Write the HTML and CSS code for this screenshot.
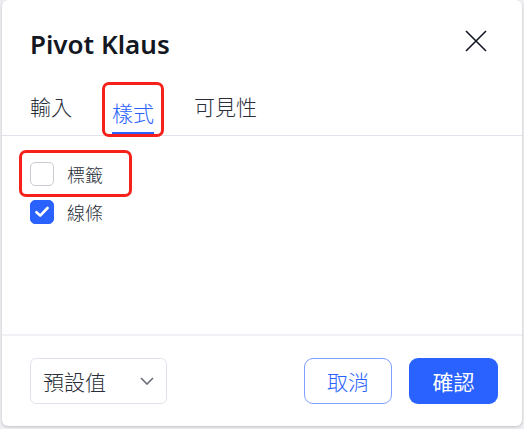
FILE: index.html
```html
<!DOCTYPE html>
<html lang="zh-Hant">

<head>
    <meta charset="UTF-8">
    <meta name="viewport" content="width=device-width, initial-scale=1.0">
    <title>Pivot Klaus</title>
    <link rel="stylesheet" href="styles.css">
</head>

<body>
    <div class="dialog">
        <div class="dialog-header">
            <h1>Pivot Klaus</h1>
            <button class="close-btn" aria-label="close">
                <svg width="22" height="22" viewBox="0 0 22 22">
                    <path d="M1 1 L21 21 M21 1 L1 21" stroke="#131722" stroke-width="1.6" fill="none"/>
                </svg>
            </button>
        </div>

        <div class="tabs">
            <div class="tab">輸入</div>
            <div class="tab active flagged"><span>樣式</span></div>
            <div class="tab">可見性</div>
        </div>

        <div class="dialog-body">
            <label class="check-row flagged">
                <span class="box"></span>
                <span class="check-label">標籤</span>
            </label>
            <label class="check-row">
                <span class="box checked">
                    <svg width="14" height="12" viewBox="0 0 14 12">
                        <path d="M1.5 6.2 L5.2 9.6 L12.5 2" stroke="#fff" stroke-width="2.6" fill="none" stroke-linecap="round" stroke-linejoin="round"/>
                    </svg>
                </span>
                <span class="check-label">線條</span>
            </label>
        </div>

        <div class="dialog-footer">
            <div class="select">
                <span>預設值</span>
                <svg width="14" height="8" viewBox="0 0 14 8">
                    <path d="M1 1 L7 7 L13 1" stroke="#6a6d78" stroke-width="1.6" fill="none"/>
                </svg>
            </div>
            <div class="actions">
                <button class="btn btn-outline">取消</button>
                <button class="btn btn-primary">確認</button>
            </div>
        </div>
    </div>
</body>

</html>
```

FILE: styles.css
```css
* {
    padding: 0;
    margin: 0;
    box-sizing: border-box;
}

body {
    font-family: "Noto Sans", "Noto Sans CJK TC", sans-serif;
    background-color: #eeeff2;
    color: #131722;
    width: 524px;
    height: 429px;
    overflow: hidden;
}

.dialog {
    margin-left: 2px;
    width: 520px;
    height: 426px;
    background: white;
    border-radius: 6px;
    box-shadow: 0 1px 3px rgba(0, 0, 0, 0.2);
    display: flex;
    flex-direction: column;
}

.dialog-header {
    display: flex;
    justify-content: space-between;
    align-items: center;
    padding: 0 35px 0 28px;
    height: 80px;
    margin-top: 4px;
    margin-bottom: -4px;
}

.dialog-header h1 {
    font-size: 26px;
    font-weight: 600;
    line-height: 34px;
}

.close-btn {
    background: none;
    border: none;
    display: flex;
    margin-top: -6px;
}

.tabs {
    display: flex;
    gap: 40px;
    padding-left: 28px;
    height: 56px;
    border-bottom: 1px solid #e0e3eb;
}

.tab {
    font-family: "Noto Sans CJK TC", sans-serif;
    font-weight: 300;
    font-size: 21px;
    color: #2a2e39;
    display: flex;
    align-items: center;
    padding-bottom: 4px;
}

.tab.active {
    color: #2962ff;
    position: relative;
}

.tab.active span {
    height: 100%;
    display: flex;
    align-items: center;
    padding-top: 8px;
    border-bottom: 3px solid #2962ff;
}

.tab.flagged {
    margin: 4px -8px 0;
    padding: 0 8px;
}

.flagged {
    outline: 3px solid #f5211a;
    outline-offset: -1px;
    border-radius: 5px;
}

.dialog-body {
    flex: 1;
    padding: 16px 0 0 19px;
    display: flex;
    flex-direction: column;
    align-items: flex-start;
}

.check-row {
    display: flex;
    align-items: center;
    gap: 13px;
    height: 43px;
    padding: 0 27px 0 9px;
    font-family: "Noto Sans CJK TC", sans-serif;
    font-weight: 300;
    font-size: 18px;
    color: #2a2e39;
}

.check-row + .check-row {
    height: 38px;
    margin-top: -2px;
}

.box {
    width: 24px;
    height: 24px;
    border: 1px solid #c9cbd2;
    border-radius: 5px;
    display: flex;
    align-items: center;
    justify-content: center;
}

.box.checked {
    background-color: #2962ff;
    border-color: #2962ff;
}

.dialog-footer {
    height: 92px;
    border-top: 2px solid #f0f1f5;
    display: flex;
    justify-content: space-between;
    align-items: center;
    padding: 0 24px 0 28px;
}

.select {
    width: 137px;
    height: 46px;
    border: 1px solid #e0e3eb;
    border-radius: 6px;
    display: flex;
    justify-content: space-between;
    align-items: center;
    padding: 0 12px 0 12px;
    font-family: "Noto Sans CJK TC", sans-serif;
    font-weight: 300;
    font-size: 21px;
    color: #2a2e39;
}

.actions {
    display: flex;
    gap: 17px;
}

.btn {
    height: 46px;
    border-radius: 9px;
    font-family: "Noto Sans CJK TC", sans-serif;
    font-size: 21px;
    cursor: pointer;
}

.btn-outline {
    width: 88px;
    background: white;
    color: #2962ff;
    border: 1px solid #7f9fff;
    font-weight: 300;
}

.btn-primary {
    width: 89px;
    background-color: #2962ff;
    color: white;
    border: none;
}
```
